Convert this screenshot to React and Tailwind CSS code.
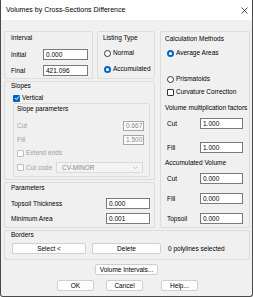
import React from "react";

const Box = ({ className, children }) => (
  <div className={`border border-[#dcdcdc] rounded-[2px] ${className}`}>{children}</div>
);

const Field = ({ value, className, disabled }) => (
  <div
    className={`flex items-center pl-[2px] ${
      disabled
        ? "bg-[#fafafa] border border-[#a6a6a6] text-[#8a8a8a]"
        : "bg-white border border-[#7a7a7a] text-black"
    } ${className}`}
  >
    {value}
  </div>
);

const Radio = ({ checked }) =>
  checked ? (
    <span className="w-[7px] h-[7px] rounded-full bg-[#0067c0] flex items-center justify-center shrink-0">
      <span className="w-[3px] h-[3px] rounded-full bg-white" />
    </span>
  ) : (
    <span className="w-[7px] h-[7px] rounded-full border border-[#333] bg-white shrink-0" />
  );

const Check = ({ checked, disabled }) =>
  checked ? (
    <span className="w-[7px] h-[7px] rounded-[1px] bg-[#0067c0] flex items-center justify-center shrink-0">
      <svg width="6" height="6" viewBox="0 0 6 6">
        <path d="M1 3.2 L2.4 4.5 L5 1.5" stroke="white" strokeWidth="1" fill="none" />
      </svg>
    </span>
  ) : (
    <span
      className={`w-[7px] h-[7px] rounded-[1px] border bg-white shrink-0 ${
        disabled ? "border-[#bcbcbc]" : "border-[#333]"
      }`}
    />
  );

const Button = ({ children, className }) => (
  <div
    className={`h-[11px] flex items-center justify-center bg-[#fdfdfd] border border-[#cfcfcf] rounded-[2px] text-black ${className}`}
  >
    {children}
  </div>
);

export default function App() {
  return (
    <div className="w-[253px] h-[297px] flex flex-col bg-[#f0f0f0] border-x border-b border-[#4a4a4a] rounded-b-[3px] text-[6.5px] leading-[8px] text-black font-['Liberation_Sans',Arial,sans-serif] overflow-hidden">
      {/* title bar */}
      <div className="h-[20px] shrink-0 flex items-center justify-between pl-[5px] pr-[4px] bg-white">
        <span className="text-[7px]">Volumes by Cross-Sections Difference</span>
        <svg width="7" height="7" viewBox="0 0 7 7">
          <path d="M0.5 0.5 L6.5 6.5 M6.5 0.5 L0.5 6.5" stroke="#222" strokeWidth="0.8" />
        </svg>
      </div>

      <div className="flex flex-col pl-[3px] pt-[11px]">
        <div className="flex gap-[5px]">
          {/* left column */}
          <div className="w-[151px] flex flex-col gap-[2px]">
            <div className="h-[48px] flex gap-[4px]">
              <Box className="w-[89px] h-full flex flex-col pl-[6px] pt-[2px]">
                <div className="h-[8px]">Interval</div>
                <div className="mt-[7px] h-[11px] flex items-center">
                  <span className="w-[32px]">Initial</span>
                  <Field value="0.000" className="w-[45px] h-[11px]" />
                </div>
                <div className="mt-[5px] h-[11px] flex items-center">
                  <span className="w-[32px]">Final</span>
                  <Field value="421.096" className="w-[45px] h-[11px]" />
                </div>
              </Box>
              <Box className="w-[58px] h-full flex flex-col pl-[5px] pt-[2px]">
                <div className="h-[8px]">Listing Type</div>
                <div className="mt-[6px] h-[10px] flex items-center gap-[2px] ml-[1px]">
                  <Radio />
                  <span>Normal</span>
                </div>
                <div className="mt-[6px] h-[10px] flex items-center gap-[2px] ml-[1px]">
                  <Radio checked />
                  <span>Accumulated</span>
                </div>
              </Box>
            </div>

            <Box className="h-[99px] flex flex-col pl-[6px]">
              <div className="h-[8px]">Slopes</div>
              <div className="mt-[4px] h-[8px] flex items-center gap-[2px] ml-[2px]">
                <Check checked />
                <span>Vertical</span>
              </div>
              <Box className="mt-[1px] ml-[2px] w-[137px] h-[74px] flex flex-col pl-[3px] pt-[1px]">
                <div className="h-[8px]">Slope parameters</div>
                <div className="mt-[8px] h-[10px] flex items-center text-[#a0a0a0]">
                  <span className="w-[106px]">Cut</span>
                  <Field value="0.667" disabled className="w-[21px] h-[10px]" />
                </div>
                <div className="mt-[4px] h-[10px] flex items-center text-[#a0a0a0]">
                  <span className="w-[106px]">Fill</span>
                  <Field value="1.500" disabled className="w-[21px] h-[10px]" />
                </div>
                <div className="mt-[4px] h-[8px] flex items-center gap-[2px] text-[#a0a0a0]">
                  <Check disabled />
                  <span>Extend ends</span>
                </div>
                <div className="mt-[5px] h-[11px] flex items-center text-[#a0a0a0]">
                  <Check disabled />
                  <span className="w-[32px] pl-[2px]">Cut code</span>
                  <div className="w-[87px] h-[11px] flex items-center justify-between pl-[5px] pr-[4px] bg-[#f3f3f3] border border-[#dadada] text-[#8a8a8a]">
                    <span>CV-MINOR</span>
                    <svg width="5" height="3" viewBox="0 0 5 3">
                      <path d="M0.5 0.5 L2.5 2.5 L4.5 0.5" stroke="#b0b0b0" strokeWidth="0.7" fill="none" />
                    </svg>
                  </div>
                </div>
              </Box>
            </Box>

            <Box className="h-[46px] flex flex-col pl-[6px] pt-[1px]">
              <div className="h-[8px]">Parameters</div>
              <div className="mt-[6px] h-[11px] flex items-center">
                <span className="w-[95px]">Topsoil Thickness</span>
                <Field value="0.000" className="w-[44px] h-[11px]" />
              </div>
              <div className="mt-[4px] h-[11px] flex items-center">
                <span className="w-[95px]">Minimum Area</span>
                <Field value="0.001" className="w-[44px] h-[11px]" />
              </div>
            </Box>
          </div>

          {/* right column */}
          <Box className="w-[90px] h-[197px] flex flex-col pl-[4px] pt-[3px]">
            <div className="h-[8px]">Calculation Methods</div>
            <div className="mt-[5px] h-[10px] flex items-center gap-[2px] ml-[2px]">
              <Radio checked />
              <span>Average Areas</span>
            </div>
            <div className="mt-[16px] h-[10px] flex items-center gap-[2px] ml-[2px]">
              <Radio />
              <span>Prismatoids</span>
            </div>
            <div className="mt-[4px] h-[8px] flex items-center gap-[2px] ml-[2px]">
              <Check />
              <span>Curvature Correction</span>
            </div>
            <div className="mt-[8px] h-[8px]">Volume multiplication factors</div>
            <div className="mt-[6px] h-[11px] flex items-center ml-[2px]">
              <span className="w-[33px]">Cut</span>
              <Field value="1.000" className="w-[43px] h-[11px]" />
            </div>
            <div className="mt-[13px] h-[11px] flex items-center ml-[2px]">
              <span className="w-[33px]">Fill</span>
              <Field value="1.000" className="w-[43px] h-[11px]" />
            </div>
            <div className="mt-[6px] h-[8px]">Accumulated Volume</div>
            <div className="mt-[6px] h-[11px] flex items-center ml-[2px]">
              <span className="w-[33px]">Cut</span>
              <Field value="0.000" className="w-[43px] h-[11px]" />
            </div>
            <div className="mt-[9px] h-[11px] flex items-center ml-[2px]">
              <span className="w-[33px]">Fill</span>
              <Field value="0.000" className="w-[43px] h-[11px]" />
            </div>
            <div className="mt-[9px] h-[11px] flex items-center ml-[2px]">
              <span className="w-[33px]">Topsoil</span>
              <Field value="0.000" className="w-[43px] h-[11px]" />
            </div>
          </Box>
        </div>

        {/* borders */}
        <Box className="mt-[2px] w-[246px] h-[30px] flex flex-col pl-[6px]">
          <div className="h-[8px]">Borders</div>
          <div className="mt-[4px] flex items-center">
            <Button className="ml-[1px] w-[74px]">Select &lt;</Button>
            <Button className="ml-[6px] w-[69px]">Delete</Button>
            <span className="ml-[7px]">0 polylines selected</span>
          </div>
        </Box>
      </div>

      <div className="mt-[4px] flex justify-center">
        <Button className="w-[63px]">Volume Intervals...</Button>
      </div>
      <div className="mt-[5px] flex pl-[56px]">
        <Button className="w-[37px] border-[#8c8c8c]">OK</Button>
        <Button className="ml-[12px] w-[37px]">Cancel</Button>
        <Button className="ml-[18px] w-[37px]">Help...</Button>
      </div>
    </div>
  );
}
